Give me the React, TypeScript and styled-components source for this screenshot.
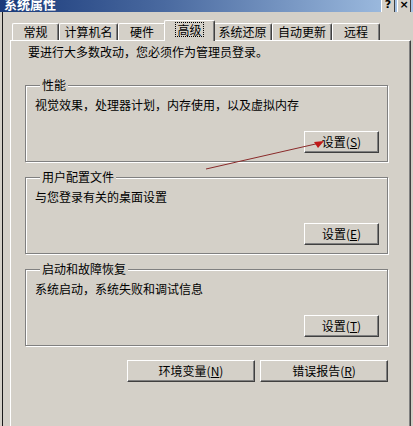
import React from 'react';
import styled, { createGlobalStyle } from 'styled-components';

const GlobalStyle = createGlobalStyle`
	html, body {
		margin: 0;
		padding: 0;
		background: #d4d0c8;
	}
	body {
		font-family: "Noto Sans CJK SC", "DejaVu Sans", sans-serif;
		font-size: 12px;
		color: #000;
	}
`;

const Window = styled.div`
	position: relative;
	width: 413px;
	height: 426px;
	overflow: hidden;
	background: #d4d0c8;
	display: flex;
	flex-direction: column;
`;

const TitleBar = styled.div`
	height: 12px;
	flex-shrink: 0;
	display: flex;
	align-items: flex-end;
	overflow: hidden;
	background: linear-gradient(to right, #1a3a7a 0%, #4a6aa0 40%, #a6c4e6 100%);
`;

const TitleText = styled.div`
	height: 14px;
	line-height: 14px;
	margin: 0 0 1px 4px;
	color: #fff;
	font-weight: bold;
	font-size: 13px;
	letter-spacing: 0px;
	flex: 1;
`;

const CaptionBtn = styled.div`
	width: 14px;
	height: 14px;
	margin: 0 2px -1px 0;
	box-sizing: border-box;
	background: #d4d0c8;
	border: 1px solid;
	border-color: #fff #404040 #404040 #fff;
	font-family: "DejaVu Sans", sans-serif;
	font-weight: bold;
	font-size: 11px;
	line-height: 10px;
	text-align: center;
	color: #000;
`;

const Body = styled.div`
	flex: 1;
	margin-left: 2px;
	border-left: 1px solid #1a1a1a;
	padding: 0 2px 0 7px;
	display: flex;
	flex-direction: column;
`;

const TabRow = styled.div`
	height: 28px;
	display: flex;
	align-items: flex-end;
	padding-left: 2px;
	position: relative;
	z-index: 1;
`;

const Tab = styled.div<{ $w: number; $active?: boolean }>`
	box-sizing: border-box;
	width: ${p => p.$w}px;
	height: ${p => (p.$active ? 21 : 17)}px;
	margin: ${p => (p.$active ? '0 -2px -1px -2px' : '0')};
	display: flex;
	align-items: center;
	justify-content: center;
	background: #d4d0c8;
	border-top: 1px solid #fff;
	border-left: 1px solid #fff;
	border-right: 1px solid #404040;
	border-radius: 2px 2px 0 0;
	box-shadow: inset -1px 0 0 #808080;
	line-height: 14px;
	padding-bottom: ${p => (p.$active ? 3 : 0)}px;
	position: relative;
	z-index: ${p => (p.$active ? 2 : 1)};
`;

const Focus = styled.span`
	border: 1px dotted #000;
	padding: 0 1px;
	line-height: 13px;
`;

const Panel = styled.div`
	flex: 1;
	border-top: 1px solid #fff;
	border-left: 1px solid #fff;
	border-right: 1px solid #404040;
	box-shadow: inset -1px 0 0 #808080;
	padding: 4px 22px 0 14px;
	display: flex;
	flex-direction: column;
`;

const Intro = styled.div`
	line-height: 14px;
	padding-left: 3px;
	margin-bottom: 19px;
`;

const Group = styled.fieldset`
	margin: 0 0 8px 0;
	padding: 0 8px 8px 9px;
	border: 1px solid #808080;
	box-shadow: 1px 1px 0 #fff, inset 1px 1px 0 #fff;
	display: flex;
	flex-direction: column;
	min-inline-size: 0;
`;

const Legend = styled.legend`
	padding: 0 2px;
	margin-left: 5px;
	line-height: 14px;
	background: #d4d0c8;
`;

const Desc = styled.div`
	line-height: 14px;
	margin-top: 6px;
`;

const BtnRow = styled.div`
	display: flex;
	justify-content: flex-end;
	gap: 5px;
	margin-top: ${(p: { $top?: number }) => p.$top ?? 0}px;
`;

const Button = styled.div<{ $w: number }>`
	box-sizing: border-box;
	width: ${p => p.$w}px;
	height: 22px;
	display: flex;
	align-items: center;
	justify-content: center;
	background: #d4d0c8;
	border: 1px solid;
	border-color: #fff #404040 #404040 #fff;
	box-shadow: inset -1px -1px 0 #808080;
	line-height: 14px;
`;

const Arrow = styled.svg`
	position: absolute;
	left: 0;
	top: 0;
	pointer-events: none;
`;

const tabs = [
	{ label: '常规', w: 47 },
	{ label: '计算机名', w: 59 },
	{ label: '硬件', w: 48 },
	{ label: '高级', w: 51, active: true },
	{ label: '系统还原', w: 59 },
	{ label: '自动更新', w: 60 },
	{ label: '远程', w: 48 },
];

const groups = [
	{ title: '性能', desc: '视觉效果，处理器计划，内存使用，以及虚拟内存', key: 'S' },
	{ title: '用户配置文件', desc: '与您登录有关的桌面设置', key: 'E' },
	{ title: '启动和故障恢复', desc: '系统启动，系统失败和调试信息', key: 'T' },
];

function App() {
	return (
		<Window>
			<GlobalStyle />
			<TitleBar>
				<TitleText>系统属性</TitleText>
				<CaptionBtn>?</CaptionBtn>
				<CaptionBtn>×</CaptionBtn>
			</TitleBar>
			<Body>
				<TabRow>
					{tabs.map(t => (
						<Tab key={t.label} $w={t.w} $active={t.active}>
							{t.active ? <Focus>{t.label}</Focus> : t.label}
						</Tab>
					))}
				</TabRow>
				<Panel>
					<Intro>要进行大多数改动，您必须作为管理员登录。</Intro>
					{groups.map(g => (
						<Group key={g.title}>
							<Legend>{g.title}</Legend>
							<Desc>{g.desc}</Desc>
							<BtnRow $top={19}>
								<Button $w={75}>设置(<u>{g.key}</u>)</Button>
							</BtnRow>
						</Group>
					))}
					<BtnRow $top={6}>
						<Button $w={128}>环境变量(<u>N</u>)</Button>
						<Button $w={128}>错误报告(<u>R</u>)</Button>
					</BtnRow>
				</Panel>
			</Body>
			<Arrow width="413" height="426" viewBox="0 0 413 426">
				<line x1="206" y1="169" x2="320" y2="143" stroke="#8a2a2a" strokeWidth="1" />
				<polygon points="324,141 314,142 318,148" fill="#c01818" />
			</Arrow>
		</Window>
	);
}

export default App;
